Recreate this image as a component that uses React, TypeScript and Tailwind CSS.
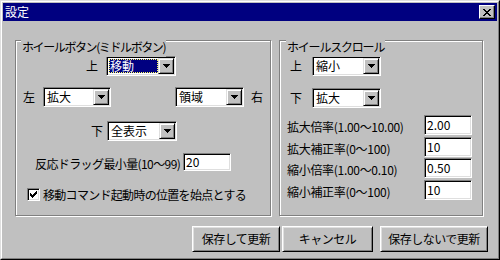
import React from "react";

const font = { fontFamily: '"Noto Sans CJK JP", "Liberation Sans", sans-serif' };

function Arrow() {
  return (
    <svg width="7" height="4" viewBox="0 0 7 4" shapeRendering="crispEdges">
      <path d="M0 0h7v1H0zM1 1h5v1H1zM2 2h3v1H2zM3 3h1v1H3z" fill="#000" />
    </svg>
  );
}

function Combo({ value, w, focused }: { value: string; w: string; focused?: boolean }) {
  return (
    <div
      className={`${w} h-[20px] flex bg-white border border-t-[#808080] border-l-[#808080] border-b-white border-r-white shadow-[inset_1px_1px_0_#000,inset_-1px_-1px_0_#dfdfdf] p-[1px]`}
    >
      <div className="flex-1 flex items-center min-w-0 pl-[1px] py-[1px]">
        {focused ? (
          <div className="h-full w-full bg-[#000080] text-white flex items-center pl-[1px] outline outline-1 outline-dotted outline-[#ffff60] -outline-offset-1">
            <span className="text-[12px] leading-[14px]">{value}</span>
          </div>
        ) : (
          <span className="text-[12px] leading-[14px] pl-[1px]">{value}</span>
        )}
      </div>
      <div className="w-[16px] h-full flex items-center justify-center bg-[#c0c0c0] border border-t-[#dfdfdf] border-l-[#dfdfdf] border-b-black border-r-black shadow-[inset_1px_1px_0_#fff,inset_-1px_-1px_0_#808080]">
        <Arrow />
      </div>
    </div>
  );
}

function Field({ value, h = "h-[20px]" }: { value: string; h?: string }) {
  return (
    <div
      className={`w-[48px] ${h} flex items-center bg-white border border-t-[#808080] border-l-[#808080] border-b-white border-r-white shadow-[inset_1px_1px_0_#000,inset_-1px_-1px_0_#dfdfdf] pl-[2px]`}
    >
      <span className="text-[12px] leading-[14px]">{value}</span>
    </div>
  );
}

function Button({ label, w, cls = "" }: { label: string; w: string; cls?: string }) {
  return (
    <div
      className={`${w} ${cls} h-[26px] flex items-center justify-center bg-[#c0c0c0] border border-t-white border-l-white border-b-black border-r-black shadow-[inset_1px_1px_0_#dfdfdf,inset_-1px_-1px_0_#808080]`}
    >
      <span className="text-[12px] leading-[14px] tracking-[-0.5px] whitespace-nowrap">{label}</span>
    </div>
  );
}

function Label({ children, cls = "" }: { children: React.ReactNode; cls?: string }) {
  return <span className={`text-[12px] leading-[14px] whitespace-nowrap ${cls}`}>{children}</span>;
}

export default function App() {
  return (
    <div className="w-[500px] h-[260px] bg-[#c0c0c0] text-black" style={font}>
      <div className="w-full h-full border border-t-[#dfdfdf] border-l-[#dfdfdf] border-b-black border-r-black">
        <div className="w-full h-full border border-t-white border-l-white border-b-[#808080] border-r-[#808080] p-[1px] flex flex-col">
          {/* Title bar */}
          <div className="h-[18px] bg-[#000080] flex items-center justify-between pl-[2px] pr-[2px]">
            <span className="text-white text-[12px] leading-[14px]">設定</span>
            <div className="w-[16px] h-[14px] flex items-center justify-center bg-[#c0c0c0] border border-t-white border-l-white border-b-black border-r-black shadow-[inset_-1px_-1px_0_#808080]">
              <svg width="8" height="7" viewBox="0 0 8 7" shapeRendering="crispEdges">
                <path
                  d="M0 0h2v1H0zM6 0h2v1H6zM1 1h2v1H1zM5 1h2v1H5zM2 2h4v1H2zM3 3h2v1H3zM2 4h4v1H2zM1 5h2v1H1zM5 5h2v1H5zM0 6h2v1H0zM6 6h2v1H6z"
                  fill="#000"
                />
              </svg>
            </div>
          </div>

          {/* Body */}
          <div className="flex-1 flex flex-col pl-[12px]">
            <div className="flex mt-[19px] gap-[8px]">
              {/* Group 1 */}
              <div className="relative w-[256px] h-[176px] border border-[#808080] shadow-[inset_1px_1px_0_#fff,1px_1px_0_#fff] flex flex-col">
                <div className="absolute left-[5px] -top-[8px] bg-[#c0c0c0] px-[1px]">
                  <Label cls="tracking-[-1.4px]">ホイールボタン(ミドルボタン)</Label>
                </div>
                <div className="flex items-center h-[20px] mt-[15px] pl-[70px] gap-[8px]">
                  <Label>上</Label>
                  <Combo value="移動" w="w-[70px]" focused />
                </div>
                <div className="flex items-center h-[20px] mt-[11px] pl-[7px]">
                  <Label>左</Label>
                  <div className="ml-[8px]">
                    <Combo value="拡大" w="w-[68px]" />
                  </div>
                  <div className="ml-[64px]">
                    <Combo value="領域" w="w-[69px]" />
                  </div>
                  <Label cls="ml-[7px]">右</Label>
                </div>
                <div className="flex items-center h-[20px] mt-[14px] pl-[75px] gap-[4px]">
                  <Label>下</Label>
                  <Combo value="全表示" w="w-[70px]" />
                </div>
                <div className="flex items-center h-[18px] mt-[12px] pl-[19px]">
                  <div className="w-[148px] shrink-0">
                    <Label cls="tracking-[-0.6px]">反応ドラッグ最小量(10〜99)</Label>
                  </div>
                  <Field value="20" h="h-[18px]" />
                </div>
                <div className="flex items-center h-[13px] mt-[17px] pl-[11px] gap-[3px]">
                  <div className="w-[13px] h-[13px] shrink-0 flex items-center justify-center bg-white border border-t-[#808080] border-l-[#808080] border-b-white border-r-white shadow-[inset_1px_1px_0_#000,inset_-1px_-1px_0_#dfdfdf]">
                    <svg width="7" height="7" viewBox="0 0 7 7" shapeRendering="crispEdges">
                      <path
                        d="M6 0h1v1H6zM5 1h2v1H5zM0 2h1v1H0zM4 2h3v1H4zM0 3h2v1H0zM3 3h3v1H3zM0 4h5v1H0zM1 5h3v1H1zM2 6h1v1H2z"
                        fill="#000"
                      />
                    </svg>
                  </div>
                  <Label cls="tracking-[-0.7px]">移動コマンド起動時の位置を始点とする</Label>
                </div>
              </div>

              {/* Group 2 */}
              <div className="relative w-[204px] h-[176px] border border-[#808080] shadow-[inset_1px_1px_0_#fff,1px_1px_0_#fff] flex flex-col">
                <div className="absolute left-[6px] -top-[8px] bg-[#c0c0c0] px-[1px]">
                  <Label cls="tracking-[-1.2px]">ホイールスクロール</Label>
                </div>
                <div className="flex items-center h-[20px] mt-[15px] pl-[10px] gap-[10px]">
                  <Label>上</Label>
                  <Combo value="縮小" w="w-[69px]" />
                </div>
                <div className="flex items-center h-[20px] mt-[12px] pl-[10px] gap-[10px]">
                  <Label>下</Label>
                  <Combo value="拡大" w="w-[69px]" />
                </div>
                <div className="flex items-center h-[20px] mt-[7px] pl-[7px]">
                  <div className="w-[137px] shrink-0">
                    <Label cls="tracking-[-0.3px]">拡大倍率(1.00〜10.00)</Label>
                  </div>
                  <Field value="2.00" />
                </div>
                <div className="flex items-center h-[20px] mt-[2px] pl-[7px]">
                  <div className="w-[137px] shrink-0">
                    <Label cls="tracking-[-0.3px]">拡大補正率(0〜100)</Label>
                  </div>
                  <Field value="10" />
                </div>
                <div className="flex items-center h-[20px] mt-[1px] pl-[7px]">
                  <div className="w-[137px] shrink-0">
                    <Label cls="tracking-[-0.3px]">縮小倍率(1.00〜0.10)</Label>
                  </div>
                  <Field value="0.50" />
                </div>
                <div className="flex items-center h-[20px] mt-[2px] pl-[7px]">
                  <div className="w-[137px] shrink-0">
                    <Label cls="tracking-[-0.3px]">縮小補正率(0〜100)</Label>
                  </div>
                  <Field value="10" />
                </div>
              </div>
            </div>

            {/* Buttons */}
            <div className="flex mt-[10px] pl-[177px]">
              <Button label="保存して更新" w="w-[88px]" />
              <Button label="キャンセル" w="w-[91px]" cls="ml-[2px]" />
              <Button label="保存しないで更新" w="w-[108px]" cls="ml-[7px]" />
            </div>
          </div>
        </div>
      </div>
    </div>
  );
}
